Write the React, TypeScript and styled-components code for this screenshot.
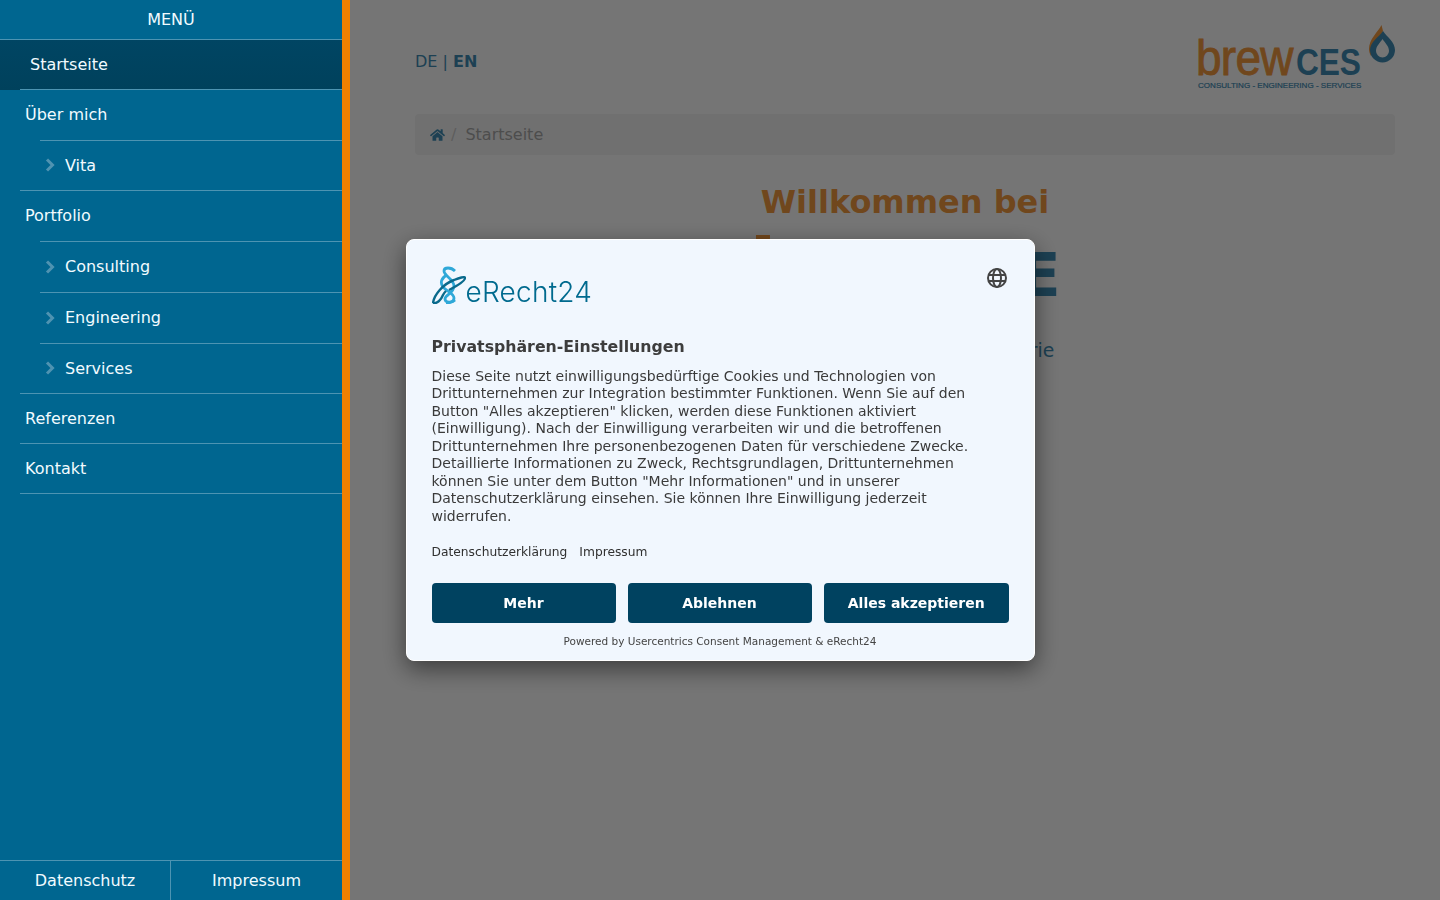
import React from "react";
import styled, { createGlobalStyle } from "styled-components";
import { FaHome } from "react-icons/fa";

const GlobalStyle = createGlobalStyle`
  html, body {
    margin: 0;
    padding: 0;
    height: 100%;
    overflow: hidden;
    background: #fff;
    font-family: "DejaVu Sans", sans-serif;
  }
  * {
    box-sizing: border-box;
  }
`;

const Page = styled.div`
  display: flex;
  height: 900px;
`;

const Sidebar = styled.aside`
  position: relative;
  z-index: 30;
  display: flex;
  flex-direction: column;
  flex: 0 0 350px;
  height: 900px;
  background: #006690;
  border-right: 8px solid #f08000;
  color: #f2fbff;
`;

const MenuTitle = styled.div`
  height: 40px;
  padding-top: 10px;
  text-align: center;
  font-size: 16px;
  line-height: 19px;
  border-bottom: 1px solid #4d94b2;
`;

const NavList = styled.ul`
  flex: 1;
  margin: 0;
  padding: 0;
  list-style: none;
`;

const NavItem = styled.li<{ $active?: boolean; $child?: boolean; $height: number; $ruleFrom: number }>`
  position: relative;
  display: flex;
  align-items: center;
  height: ${(p) => p.$height}px;
  padding-left: ${(p) => (p.$child ? 45 : p.$active ? 30 : 25)}px;
  padding-bottom: 2px;
  background: ${(p) => (p.$active ? "linear-gradient(#004563, #00415c)" : "none")};
  font-size: 16px;

  &::after {
    content: "";
    position: absolute;
    left: ${(p) => p.$ruleFrom}px;
    right: 0;
    bottom: 0;
    height: 1px;
    background: #4d94b2;
  }
`;

const ChevronMark = styled.svg`
  margin-right: 10px;
  color: #4f93b1;
`;

const FootNav = styled.div`
  display: grid;
  grid-template-columns: 171px 171px;
  height: 40px;
  border-top: 1px solid #4d94b2;
`;

const FootLink = styled.a<{ $first?: boolean }>`
  display: flex;
  align-items: center;
  justify-content: center;
  font-size: 16px;
  border-right: ${(p) => (p.$first ? "1px solid #4d94b2" : "none")};
`;

const Main = styled.main`
  flex: 1;
  min-width: 0;
  padding: 25px 45px 0 65px;
`;

const TopRow = styled.div`
  display: flex;
  align-items: flex-start;
  justify-content: space-between;
  height: 89px;
`;

const Lang = styled.div`
  margin-top: 27px;
  font-size: 16px;
  line-height: 20px;
  color: #3f8db5;
  b {
    font-weight: 700;
  }
`;

const Logo = styled.div`
  position: relative;
  width: 198px;
  height: 65px;
`;

const LogoWord = styled.div`
  position: absolute;
  left: -1px;
  bottom: 12px;
  display: flex;
  align-items: baseline;
  font-family: "Liberation Sans", Arial, sans-serif;
  line-height: 30px;
  white-space: nowrap;
`;

const LogoBrew = styled.span`
  display: inline-block;
  width: 100px;
  font-size: 50px;
  letter-spacing: -0.8px;
  color: #f59b3f;
  -webkit-text-stroke: 0.9px #f59b3f;
  transform: scaleX(0.92);
  transform-origin: left center;
`;

const LogoCes = styled.span`
  display: inline-block;
  font-size: 36px;
  font-weight: 700;
  letter-spacing: -0.2px;
  color: #3f8db5;
  transform: scaleX(0.88);
  transform-origin: left center;
`;

const LogoClaim = styled.div`
  position: absolute;
  left: 1px;
  bottom: -1px;
  font-family: "Liberation Sans", Arial, sans-serif;
  font-size: 8.05px;
  line-height: 10px;
  white-space: nowrap;
  color: #3f8db5;
  -webkit-text-stroke: 0.2px #3f8db5;
`;

const LogoDrop = styled.svg`
  position: absolute;
  right: -1px;
  top: 0;
`;

const Crumbs = styled.nav`
  display: flex;
  align-items: center;
  height: 41px;
  padding-left: 15px;
  background: #f5f5f5;
  border-radius: 4px;
  font-size: 16px;
  color: #a8a8a8;
`;

const HomeIcon = styled(FaHome)`
  width: 15px;
  height: 14px;
  color: #3f8db5;
`;

const CrumbSep = styled.span`
  padding: 0 9px 0 6px;
  color: #ccc;
`;

const Hero = styled.section`
  padding-top: 26px;
  text-align: center;
`;

const HeroTitle = styled.h1`
  margin: 0;
  font-size: 32px;
  line-height: 42px;
  font-weight: 700;
  color: #f59b3f;
`;

const HeroBrand = styled.div`
  margin-top: 2px;
  font-size: 80px;
  line-height: 88px;
  font-weight: 700;
  white-space: nowrap;
  color: #f59b3f;
  span {
    font-size: 61px;
    color: #3f8db5;
  }
`;

const HeroText = styled.p`
  margin: 19px 0 0;
  font-size: 18.750px;
  line-height: 26px;
  color: #3f8db5;
`;

const Overlay = styled.div`
  position: fixed;
  inset: 0;
  z-index: 20;
  display: flex;
  align-items: center;
  justify-content: center;
  background: rgba(0, 0, 0, 0.54);
`;

const Modal = styled.div`
  width: 629px;
  height: 422px;
  padding: 26px 25px 0;
  background: #f1f7fe;
  border: 1px solid #fff;
  border-radius: 8px;
  box-shadow: 0 8px 24px rgba(0, 0, 0, 0.5);
  color: #303030;
`;

const ModalHead = styled.div`
  display: flex;
  align-items: flex-start;
  justify-content: space-between;
  height: 69px;
`;

const Brand = styled.div`
  display: flex;
  align-items: flex-end;
  height: 38px;
`;

const BrandName = styled.span`
  font-family: Inter, sans-serif;
  font-weight: 300;
  font-size: 28px;
  line-height: 28px;
  margin-bottom: -2px;
  letter-spacing: 0.25px;
  color: #006a8e;
`;

const GlobeButton = styled.svg`
  margin: 2px 2px 0 0;
`;

const ModalTitle = styled.h2`
  margin: 0;
  font-size: 15.750px;
  line-height: 24px;
  font-weight: 700;
  color: #3d3d3d;
`;

const ModalBody = styled.p`
  margin: 8.600px 0 0;
  font-size: 14px;
  line-height: 17.500px;
  color: #3a3a3a;
`;

const ModalLinks = styled.div`
  display: flex;
  gap: 12px;
  margin-top: 19px;
  font-size: 12.250px;
  line-height: 16px;
`;

const ButtonRow = styled.div`
  display: grid;
  grid-template-columns: 184px 184px 1fr;
  gap: 12px;
  margin-top: 23px;
  margin-right: -0.500px;
`;

const ActionButton = styled.button`
  height: 40px;
  border: 0;
  border-radius: 4px;
  background: #004260;
  color: #fff;
  font-family: inherit;
  font-size: 14px;
  font-weight: 700;
`;

const Powered = styled.div`
  margin-top: 11px;
  text-align: center;
  font-size: 10.500px;
  line-height: 14px;
  color: #444;
`;

const navItems = [
  { label: "Startseite", active: true, height: 50, ruleFrom: 20 },
  { label: "Über mich", height: 51, ruleFrom: 40 },
  { label: "Vita", child: true, height: 50, ruleFrom: 20 },
  { label: "Portfolio", height: 51, ruleFrom: 40 },
  { label: "Consulting", child: true, height: 51, ruleFrom: 40 },
  { label: "Engineering", child: true, height: 51, ruleFrom: 40 },
  { label: "Services", child: true, height: 50, ruleFrom: 20 },
  { label: "Referenzen", height: 50, ruleFrom: 20 },
  { label: "Kontakt", height: 50, ruleFrom: 20 },
];

const Chevron = () => (
  <ChevronMark width="10" height="14" viewBox="0 0 10 14" fill="none" aria-hidden="true">
    <path d="M2 1.500 7.500 7 2 12.500" stroke="currentColor" strokeWidth="3" />
  </ChevronMark>
);

const ChainMark = () => (
  <svg width="34" height="38" viewBox="0 0 34 38" fill="none" aria-hidden="true">
    <path d="M23 5C19 1 12 1 12 5c0 5 10 8 10 15 0 7-9 9-9 13 0 4 7 4 10 1" stroke="#2fa8d8" strokeWidth="2.800" />
    <path d="M15 9c-6 3-7 8-4 12 3 4 11 6 11 11 0 4-5 5-8 5" stroke="#2fa8d8" strokeWidth="2.800" />
    <path d="M1 37C2 29 11 18 22 14c5-2 11-4 11-2 0 3-8 8-16 12" stroke="#0a6a8c" strokeWidth="2.400" />
    <path d="M1 37c4 1 8-3 10-8 1-2 2-3 3-4" stroke="#0a6a8c" strokeWidth="2.400" />
  </svg>
);

const App = () => {
  return (
    <>
      <GlobalStyle />
      <Page>
        <Sidebar>
          <MenuTitle>MENÜ</MenuTitle>
          <NavList>
            {navItems.map((item) => (
              <NavItem
                key={item.label}
                $active={item.active}
                $child={item.child}
                $height={item.height}
                $ruleFrom={item.ruleFrom}
              >
                {item.child && <Chevron />}
                {item.label}
              </NavItem>
            ))}
          </NavList>
          <FootNav>
            <FootLink $first>Datenschutz</FootLink>
            <FootLink>Impressum</FootLink>
          </FootNav>
        </Sidebar>
        <Main>
          <TopRow>
            <Lang>
              DE | <b>EN</b>
            </Lang>
            <Logo>
              <LogoWord>
                <LogoBrew>brew</LogoBrew>
                <LogoCes>CES</LogoCes>
              </LogoWord>
              <LogoClaim>CONSULTING - ENGINEERING - SERVICES</LogoClaim>
              <LogoDrop width="27" height="38" viewBox="0 0 27 38" aria-hidden="true">
                <path d="M12.500 0C9 7 0 14 0 24c0 3 1 5 2 7L14 6z" fill="#f59b3f" />
                <path
                  fillRule="evenodd"
                  d="M14 6c4 6 12 11 12 19a12.500 12.500 0 0 1-25 0C1 17 10 12 14 6zM13.500 14C11 18 7 21 7 26a6.500 6.500 0 0 0 13 0C20 21 16 18 13.500 14z"
                  fill="#3f8db5"
                />
              </LogoDrop>
            </Logo>
          </TopRow>
          <Crumbs>
            <HomeIcon />
            <CrumbSep>/</CrumbSep>
            Startseite
          </Crumbs>
          <Hero>
            <HeroTitle>Willkommen bei</HeroTitle>
            <HeroBrand>
              brew<span>CE</span>
            </HeroBrand>
            <HeroText>Ihr Partner für die Brauindustrie</HeroText>
          </Hero>
        </Main>
      </Page>
      <Overlay>
        <Modal>
          <ModalHead>
            <Brand>
              <ChainMark />
              <BrandName>eRecht24</BrandName>
            </Brand>
            <GlobeButton width="20" height="20" viewBox="0 0 20 20" fill="none" stroke="#444" strokeWidth="2">
              <circle cx="10" cy="10" r="9" />
              <ellipse cx="10" cy="10" rx="4" ry="9" />
              <path d="M1.500 7h17M1.500 13h17" />
            </GlobeButton>
          </ModalHead>
          <ModalTitle>Privatsphären-Einstellungen</ModalTitle>
          <ModalBody>
            Diese Seite nutzt einwilligungsbedürftige Cookies und Technologien von Drittunternehmen zur
            Integration bestimmter Funktionen. Wenn Sie auf den Button "Alles akzeptieren" klicken, werden
            diese Funktionen aktiviert (Einwilligung). Nach der Einwilligung verarbeiten wir und die
            betroffenen Drittunternehmen Ihre personenbezogenen Daten für verschiedene Zwecke. Detaillierte
            Informationen zu Zweck, Rechtsgrundlagen, Drittunternehmen können Sie unter dem Button "Mehr
            Informationen" und in unserer Datenschutzerklärung einsehen. Sie können Ihre Einwilligung
            jederzeit widerrufen.
          </ModalBody>
          <ModalLinks>
            <span>Datenschutzerklärung</span>
            <span>Impressum</span>
          </ModalLinks>
          <ButtonRow>
            <ActionButton>Mehr</ActionButton>
            <ActionButton>Ablehnen</ActionButton>
            <ActionButton>Alles akzeptieren</ActionButton>
          </ButtonRow>
          <Powered>Powered by Usercentrics Consent Management &amp; eRecht24</Powered>
        </Modal>
      </Overlay>
    </>
  );
};

export default App;
